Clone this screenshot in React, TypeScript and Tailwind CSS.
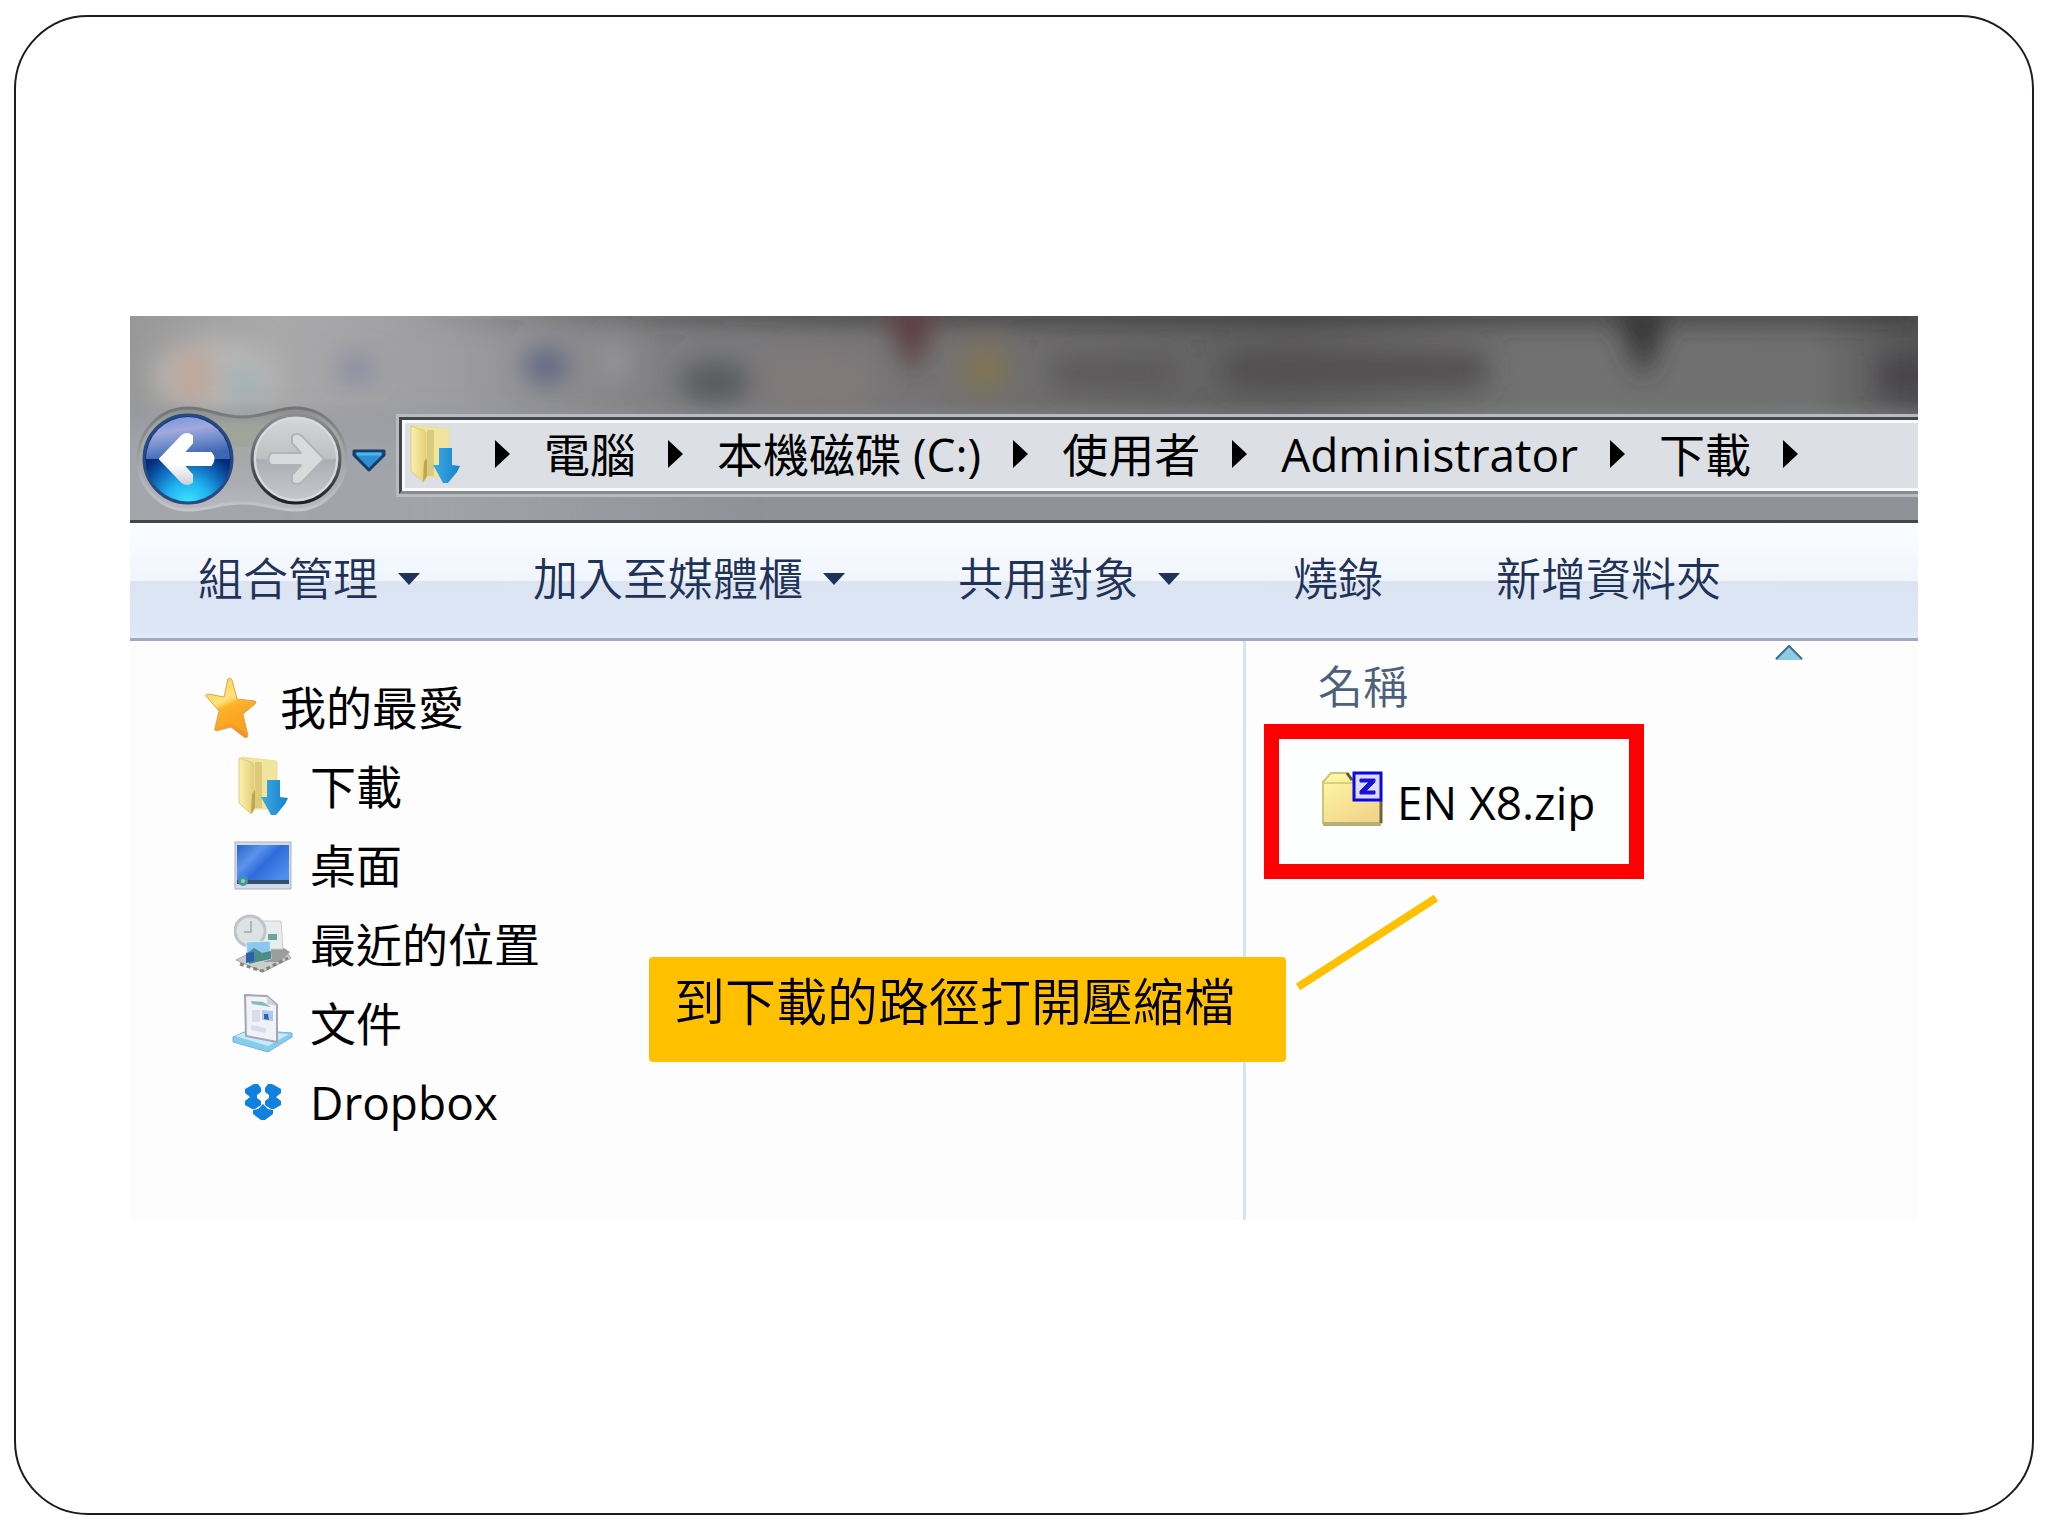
import type { ReactNode } from "react";

const places = ["電腦", "本機磁碟 (C:)", "使用者", "Administrator", "下載"];

const commands = [
  { label: "組合管理", menu: true },
  { label: "加入至媒體櫃", menu: true },
  { label: "共用對象", menu: true },
  { label: "燒錄", menu: false },
  { label: "新增資料夾", menu: false },
];

function Backdrop() {
  return (
    <svg className="absolute inset-0 h-full w-full" viewBox="0 0 1788 204" preserveAspectRatio="none" aria-hidden="true">
      <defs>
        <linearGradient id="glass">
          <stop offset="0" stopColor="#989898" />
          <stop offset="0.08" stopColor="#aaa9aa" />
          <stop offset="0.18" stopColor="#9d9da0" />
          <stop offset="0.3" stopColor="#7f7e80" />
          <stop offset="0.45" stopColor="#747273" />
          <stop offset="0.65" stopColor="#5f5e5e" />
          <stop offset="0.78" stopColor="#717171" />
          <stop offset="0.94" stopColor="#707070" />
          <stop offset="1" stopColor="#565556" />
        </linearGradient>
        <linearGradient id="shade">
          <stop offset="0.15" stopColor="#2c2c2c" stopOpacity="0" />
          <stop offset="0.4" stopColor="#2c2c2c" stopOpacity="0.75" />
          <stop offset="1" stopColor="#2c2c2c" stopOpacity="0.75" />
        </linearGradient>
        <linearGradient id="base" x2="0" y2="1">
          <stop offset="0" stopColor="#8b9097" stopOpacity="0" />
          <stop offset="0.3" stopColor="#7d858e" stopOpacity="0.8" />
          <stop offset="0.6" stopColor="#8e9298" />
          <stop offset="1" stopColor="#8f9297" />
        </linearGradient>
        <linearGradient id="baseLeft">
          <stop offset="0" stopColor="#a9abb0" stopOpacity="0.8" />
          <stop offset="0.5" stopColor="#a9abb0" stopOpacity="0.7" />
          <stop offset="1" stopColor="#a9abb0" stopOpacity="0" />
        </linearGradient>
        <filter id="soft" x="-50%" y="-50%" width="200%" height="200%">
          <feGaussianBlur stdDeviation="13" />
        </filter>
      </defs>
      <rect width="1788" height="204" fill="url(#glass)" />
      <g filter="url(#soft)">
        <rect x="0" y="-14" width="1788" height="20" fill="url(#shade)" />
        <ellipse cx="85" cy="60" rx="62" ry="38" fill="#b8b7b6" />
        <ellipse cx="64" cy="60" rx="22" ry="28" fill="#bfa699" />
        <ellipse cx="112" cy="68" rx="16" ry="16" fill="#9ab0b5" />
        <ellipse cx="226" cy="53" rx="20" ry="13" fill="#8787a0" />
        <ellipse cx="416" cy="50" rx="22" ry="17" fill="#5a6482" />
        <ellipse cx="485" cy="45" rx="14" ry="18" fill="#98989a" />
        <ellipse cx="585" cy="66" rx="36" ry="22" fill="#585b5e" />
        <ellipse cx="690" cy="66" rx="60" ry="30" fill="#807979" />
        <path d="M756 -14h50l-12 46-12 26-12-26z" fill="#5a3a41" />
        <ellipse cx="855" cy="52" rx="22" ry="25" fill="#817453" />
        <rect x="925" y="42" width="120" height="30" fill="#5a5859" />
        <rect x="1095" y="38" width="260" height="32" fill="#504e4e" />
        <path d="M1484 -14h56l-14 50-12 26-14-26z" fill="#353435" />
        <rect x="1750" y="40" width="60" height="40" fill="#474548" />
      </g>
      <rect y="84" width="1788" height="120" fill="url(#base)" />
      <rect x="-20" y="104" width="640" height="130" fill="url(#baseLeft)" filter="url(#soft)" />
    </svg>
  );
}

function Capsule() {
  return (
    <svg className="absolute inset-0 h-full w-full" viewBox="0 0 212 108" aria-hidden="true">
      <defs>
        <linearGradient id="capsule" x2="0" y2="1">
          <stop offset="0" stopColor="#8b8d8d" />
          <stop offset="0.2" stopColor="#a3a69f" />
          <stop offset="0.7" stopColor="#a9abb0" />
          <stop offset="1" stopColor="#b9babf" />
        </linearGradient>
        <linearGradient id="rim" x2="0" y2="1">
          <stop offset="0" stopColor="#727476" />
          <stop offset="0.5" stopColor="#a0a2a6" />
          <stop offset="1" stopColor="#c5c6ca" />
        </linearGradient>
      </defs>
      <path
        d="M52 3C73 3 82 12 106 12S139 3 160 3a50 51 0 0 1 0 102C139 105 130 98 106 98S73 105 52 105A50 51 0 0 1 52 3z"
        fill="url(#capsule)"
        stroke="url(#rim)"
        strokeWidth="3"
      />
      <ellipse cx="106" cy="30" rx="18" ry="12" fill="#98a087" opacity="0.3" />
    </svg>
  );
}

function BackIcon() {
  return (
    <svg className="h-full w-full" viewBox="0 0 92 92" aria-hidden="true">
      <defs>
        <linearGradient id="backTop" x2="0.3" y2="1">
          <stop offset="0" stopColor="#6d93d8" />
          <stop offset="0.4" stopColor="#a2a9de" />
          <stop offset="0.7" stopColor="#6f8bcb" />
          <stop offset="1" stopColor="#3f66b2" />
        </linearGradient>
        <radialGradient id="backLow" cx="0.5" cy="1" r="0.62">
          <stop offset="0" stopColor="#3fe6ff" />
          <stop offset="0.4" stopColor="#1fb2f0" />
          <stop offset="0.75" stopColor="#0e62b4" />
          <stop offset="1" stopColor="#052c7c" />
        </radialGradient>
        <linearGradient id="backArrow" x2="0" y2="1">
          <stop offset="0.6" stopColor="#ffffff" />
          <stop offset="1" stopColor="#cfd2d8" />
        </linearGradient>
      </defs>
      <circle cx="46" cy="46" r="44" fill="url(#backLow)" stroke="#27497f" strokeWidth="3" />
      <path d="M4 46a42 42 0 0 1 84 0z" fill="url(#backTop)" />
      <path
        d="M18 46 40 23q5-4 10 0v7L41 40h28q5 6 0 12H41l9 10v7q-5 4-10 0z"
        fill="url(#backArrow)"
        stroke="url(#backArrow)"
        strokeWidth="2"
        strokeLinejoin="round"
      />
    </svg>
  );
}

function ForwardIcon() {
  return (
    <svg className="h-full w-full" viewBox="0 0 92 92" aria-hidden="true">
      <defs>
        <linearGradient id="fwd" x2="0" y2="1">
          <stop offset="0" stopColor="#d6d7d8" />
          <stop offset="0.49" stopColor="#bfc0c2" />
          <stop offset="0.51" stopColor="#abaeb3" />
          <stop offset="1" stopColor="#c8cacf" />
        </linearGradient>
        <linearGradient id="fwdRim" x2="0" y2="1">
          <stop offset="0" stopColor="#8b8d8f" />
          <stop offset="0.5" stopColor="#606265" />
          <stop offset="1" stopColor="#1f2022" />
        </linearGradient>
      </defs>
      <circle cx="46" cy="46" r="44" fill="url(#fwd)" stroke="url(#fwdRim)" strokeWidth="3" />
      <circle cx="46" cy="46" r="41" fill="none" stroke="#d9dadd" strokeWidth="2" />
      <path
        d="M74 46 52 23q-5-4-10 0v7l9 10H21q-5 6 0 12h30L42 62v7q5 4 10 0z"
        fill="#d9dadc"
        stroke="#b2b4b8"
        strokeWidth="2"
        strokeLinejoin="round"
      />
    </svg>
  );
}

function DownloadsIcon() {
  return (
    <svg className="h-[60px] w-[52px]" viewBox="0 0 52 60" aria-hidden="true">
      <defs>
        <linearGradient id="folder">
          <stop offset="0" stopColor="#fbf0ae" />
          <stop offset="1" stopColor="#e3cf78" />
        </linearGradient>
        <linearGradient id="arrow">
          <stop offset="0" stopColor="#3fa9e4" />
          <stop offset="1" stopColor="#1583cc" />
        </linearGradient>
      </defs>
      <path d="M4 1 40 5v48H18z" fill="#f1e49c" stroke="#ecdf9f" />
      <path d="M18 6h7v46h-7z" fill="#dccb7c" />
      <path d="M2 2 14 6q3 1 3 4v44l-3 4L2 47z" fill="url(#folder)" stroke="#e0cd80" />
      <path d="M15 38l3-4v18l-4 6z" fill="#bfa650" />
      <path d="M30 24h13v17l8 1-3 6-9 11h-5l-6-11-4-7h6z" fill="url(#arrow)" />
    </svg>
  );
}

function StarIcon() {
  return (
    <svg className="h-[62px] w-[54px]" viewBox="0 0 54 62" aria-hidden="true">
      <defs>
        <linearGradient id="star" x2="0.4" y2="1">
          <stop offset="0" stopColor="#fdd25c" />
          <stop offset="0.45" stopColor="#ffe27a" />
          <stop offset="0.55" stopColor="#fdb52c" />
          <stop offset="1" stopColor="#f29324" />
        </linearGradient>
      </defs>
      <path
        d="M24 3q3-2 4 1l5 19 18 2q2 1 0 3L39 38l5 22q-1 3-4 1L27 51 12 55q-2-1-1-3l4-17L2 20q-1-2 2-2l16 3z"
        fill="url(#star)"
        stroke="#e8a24a"
        strokeWidth="1"
      />
      <path d="M13 51l3-14q14 2 20-10l3 11 4 21-15-12z" fill="#fbac22" opacity="0.6" />
    </svg>
  );
}

function DesktopIcon() {
  return (
    <svg className="h-[50px] w-[58px]" viewBox="0 0 58 50" aria-hidden="true">
      <defs>
        <linearGradient id="screen" x2="1" y2="0.7">
          <stop offset="0" stopColor="#2a63cb" />
          <stop offset="0.35" stopColor="#5c93ea" />
          <stop offset="0.6" stopColor="#2f6bdc" />
          <stop offset="1" stopColor="#4d8dee" />
        </linearGradient>
      </defs>
      <rect x="1" y="2" width="56" height="47" fill="#d5dae6" stroke="#aab1c3" />
      <rect x="3" y="5" width="52" height="36" fill="url(#screen)" />
      <rect x="3" y="40" width="52" height="4" fill="#33506f" />
      <circle cx="9" cy="41" r="5" fill="#3f96b4" />
      <circle cx="9" cy="41" r="2" fill="#9fd08a" />
    </svg>
  );
}

function RecentIcon() {
  return (
    <svg className="h-[60px] w-[58px]" viewBox="0 0 58 60" aria-hidden="true">
      <path d="M2 46 14 40h40l3 4-28 14z" fill="#cdcdcc" stroke="#a3a3a1" />
      <path d="M36 34h14l6 4-10 10H30z" fill="#9a9d9b" />
      <path d="M20 7h27l2 28H22z" fill="#e9ecee" stroke="#c9cccf" />
      <path d="M34 20h9v6h-9z" fill="#6aa5a5" />
      <circle cx="16" cy="17" r="15" fill="#dde2e4" stroke="#c0c4c6" strokeWidth="3" />
      <path d="M17 7v11h-7" fill="none" stroke="#b0b5b8" strokeWidth="2" />
      <path d="M12 28l24-1 1 18-23 5z" fill="#8cc6f2" stroke="#e3eef6" />
      <path d="M12 40l8-6 8 5 9-2v8l-22 5z" fill="#4a8c86" />
      <path d="M12 39l8-1v9l-8 2z" fill="#2c5fae" />
      <path d="M6 50l22 7 26-13" fill="none" stroke="#83837f" strokeWidth="3" strokeDasharray="4 3" />
    </svg>
  );
}

function DocumentsIcon() {
  return (
    <svg className="h-[60px] w-[62px]" viewBox="0 0 62 60" aria-hidden="true">
      <path d="M1 44 17 37l43 3v4L36 59 1 49z" fill="#86cced" stroke="#6db7d8" />
      <path d="M3 43l14-5 40 3-21 12z" fill="#c8e9f8" />
      <path d="M13 2l22 1 10 9v37L14 43z" fill="#f0f2f8" stroke="#a3a7b2" strokeWidth="2" />
      <path d="M35 3v8l10 2z" fill="#cfd4dd" />
      <path d="M19 8l12 1 8 5-19-3z" fill="#7cc0b7" />
      <path d="M20 17h8v12h-8zM19 32l15 3v5l-15-3z" fill="#dadcea" />
      <path d="M30 17l11 1v10l-11-1z" fill="#a9cbee" />
      <path d="M32 21h4l1 6-5-1z" fill="#35679f" />
    </svg>
  );
}

function DropboxIcon() {
  return (
    <svg className="h-[38px] w-[38px]" viewBox="0 0 38 38" aria-hidden="true">
      <path
        d="M10 1h4l3 4v4l-4 3v3l4 3v4l-6 4H8l-7-4v-4l5-4-5-4V6zM28 1h-4l-3 4v4l4 3v3l-4 3v4l6 4h3l7-4v-4l-5-4 5-4V6zM19 21l5 5 5 1v4l-8 6h-4l-8-6v-4l5-1z"
        fill="#1081de"
      />
    </svg>
  );
}

function ZipIcon() {
  return (
    <svg className="h-[62px] w-[62px]" viewBox="0 0 62 62" aria-hidden="true">
      <defs>
        <linearGradient id="zip" x2="0.6" y2="1">
          <stop offset="0" stopColor="#fffba6" />
          <stop offset="1" stopColor="#f3d58c" />
        </linearGradient>
      </defs>
      <path d="M2 11 10 2h16l6 8h28v42H2z" fill="url(#zip)" stroke="#c9c67c" strokeWidth="2" />
      <path d="M2 12h30" stroke="#d5d084" strokeWidth="2" />
      <path d="M2 53h58" stroke="#b5b07a" strokeWidth="4" />
      <path d="M60 30v22" stroke="#6b6738" strokeWidth="3" />
      <path d="M26 2l5 7" stroke="#5f5a2c" strokeWidth="3" />
      <rect x="33" y="2" width="27" height="27" fill="#dcdcff" stroke="#0a07e6" strokeWidth="3" />
      <path d="M39 8h15v3l-9 9h9v3H39v-3l9-9h-9z" fill="#1a12d8" stroke="#1a12d8" />
    </svg>
  );
}

function Crumb() {
  return (
    <svg className="h-[28px] w-[15px] shrink-0" viewBox="0 0 15 28" aria-hidden="true">
      <path d="M0 0 15 14 0 28z" fill="#000" />
    </svg>
  );
}

function SideItem({ icon, label }: { icon: ReactNode; label: string }) {
  return (
    <li>
      <a href="#" className="flex h-[79px] items-center gap-[15px]">
        <span className="flex w-[64px] justify-center">{icon}</span>
        {label}
      </a>
    </li>
  );
}

export default function App() {
  return (
    <main className="flex min-h-screen bg-white px-[14px] pt-[15px] pb-[21px] font-['Open_Sans','Noto_Sans_CJK_TC',sans-serif] text-[46px] leading-[60px] text-black">
      <div className="flex-1 rounded-[74px] border-2 border-[#1c1c1c] px-[114px] pt-[299px]">
        <section className="relative bg-[#fdfdfe]">
          <header className="relative h-[207px] overflow-hidden border-b-[3px] border-[#45464b]">
            <Backdrop />
            <div className="relative flex items-start pt-[89px]">
              <div className="relative ml-[6px] flex h-[108px] w-[212px] shrink-0 items-center gap-[16px] px-[6px]">
                <Capsule />
                <button aria-label="Back" className="relative size-[92px]">
                  <BackIcon />
                </button>
                <button aria-label="Forward" className="relative size-[92px]">
                  <ForwardIcon />
                </button>
              </div>
              <button aria-label="Recent pages" className="mt-[44px] ml-[4px] h-[24px] w-[34px] shrink-0">
                <svg className="h-full w-full" viewBox="0 0 34 24" aria-hidden="true">
                  <path d="M2 2h30v4L17 21 2 6z" fill="#2f8fd2" stroke="#173c68" strokeWidth="3" strokeLinejoin="round" />
                  <path d="M5 5h24" stroke="#4fb6ea" strokeWidth="3" />
                </svg>
              </button>
              <div className="mt-[9px] ml-[10px] flex-1 border-y-[3px] border-l-[3px] border-[#b9bbc0]">
                <nav
                  aria-label="Address"
                  className="flex h-[77px] items-center border-y-[3px] border-l-[3px] border-t-[#45464b] border-b-[#8a8c91] border-l-[#45464b] bg-[#dcdfe4] pb-[4px] pl-[7px] shadow-[inset_3px_3px_0_#fafafb,inset_0_-3px_0_#fafafb]"
                >
                  <DownloadsIcon />
                  <ol className="ml-[34px] flex items-center gap-[32px] whitespace-nowrap">
                    {places.map((place) => (
                      <li key={place} className="flex items-center gap-[34px]">
                        <Crumb />
                        <a href="#">{place}</a>
                      </li>
                    ))}
                    <li>
                      <Crumb />
                    </li>
                  </ol>
                </nav>
              </div>
            </div>
          </header>

          <div className="flex h-[118px] items-center gap-[113px] border-b-[3px] border-[#a0a8c2] bg-[linear-gradient(#fbfdff,#f0f5fd_50%,#dce4f1_50%,#dce6f6_94%,#e3ebf9)] px-[68px] pb-[4px] text-[45px] font-[350] whitespace-nowrap text-[#1f3257]">
            {commands.map(({ label, menu }) => (
              <button key={label} className="flex items-center gap-[20px]">
                {label}
                {menu && (
                  <svg className="h-[12px] w-[22px]" viewBox="0 0 22 12" aria-hidden="true">
                    <path d="M0 0h22L11 12z" fill="#1f3257" />
                  </svg>
                )}
              </button>
            ))}
          </div>

          <div className="flex min-h-[579px]">
            <aside className="w-[1116px] shrink-0 border-r-[3px] border-[#d5e4f1] pt-[26px]">
              <h2 className="flex h-[79px] items-center gap-[22px] pl-[74px]">
                <StarIcon />
                我的最愛
              </h2>
              <ul className="pl-[101px]">
                <SideItem icon={<DownloadsIcon />} label="下載" />
                <SideItem icon={<DesktopIcon />} label="桌面" />
                <SideItem icon={<RecentIcon />} label="最近的位置" />
                <SideItem icon={<DocumentsIcon />} label="文件" />
                <SideItem icon={<DropboxIcon />} label="Dropbox" />
              </ul>
            </aside>
            <div className="relative flex-1 pt-[16px] pl-[18px]">
              <svg className="absolute top-[4px] left-[529px] h-[15px] w-[28px]" viewBox="0 0 28 15" aria-hidden="true">
                <path d="M14 0 28 15H0z" fill="#8fcbe3" />
                <path d="M27 14 14 1 1 14" fill="none" stroke="#3b718f" strokeWidth="2" />
              </svg>
              <h3 className="pl-[54px] text-[45px] font-[350] text-[#4c607a]">名稱</h3>
              <a
                href="#"
                className="mt-[7px] flex h-[155px] w-[380px] items-center gap-[14px] border-[15px] border-[#ff0000] bg-[#fcfffe] pl-[42px] whitespace-nowrap"
              >
                <ZipIcon />
                EN X8.zip
              </a>
            </div>
          </div>

          <p className="absolute top-[641px] left-[519px] h-[105px] w-[637px] rounded-[4px] bg-[#ffc000] px-[25px] pt-[14px] text-[51px] font-[350] whitespace-nowrap">
            到下載的路徑打開壓縮檔
          </p>
          <svg className="absolute top-[578px] left-[1164px] h-[100px] w-[148px]" viewBox="0 0 148 100" aria-hidden="true">
            <path d="M4 93 142 4" stroke="#ffc000" strokeWidth="8" />
          </svg>
        </section>
      </div>
    </main>
  );
}
